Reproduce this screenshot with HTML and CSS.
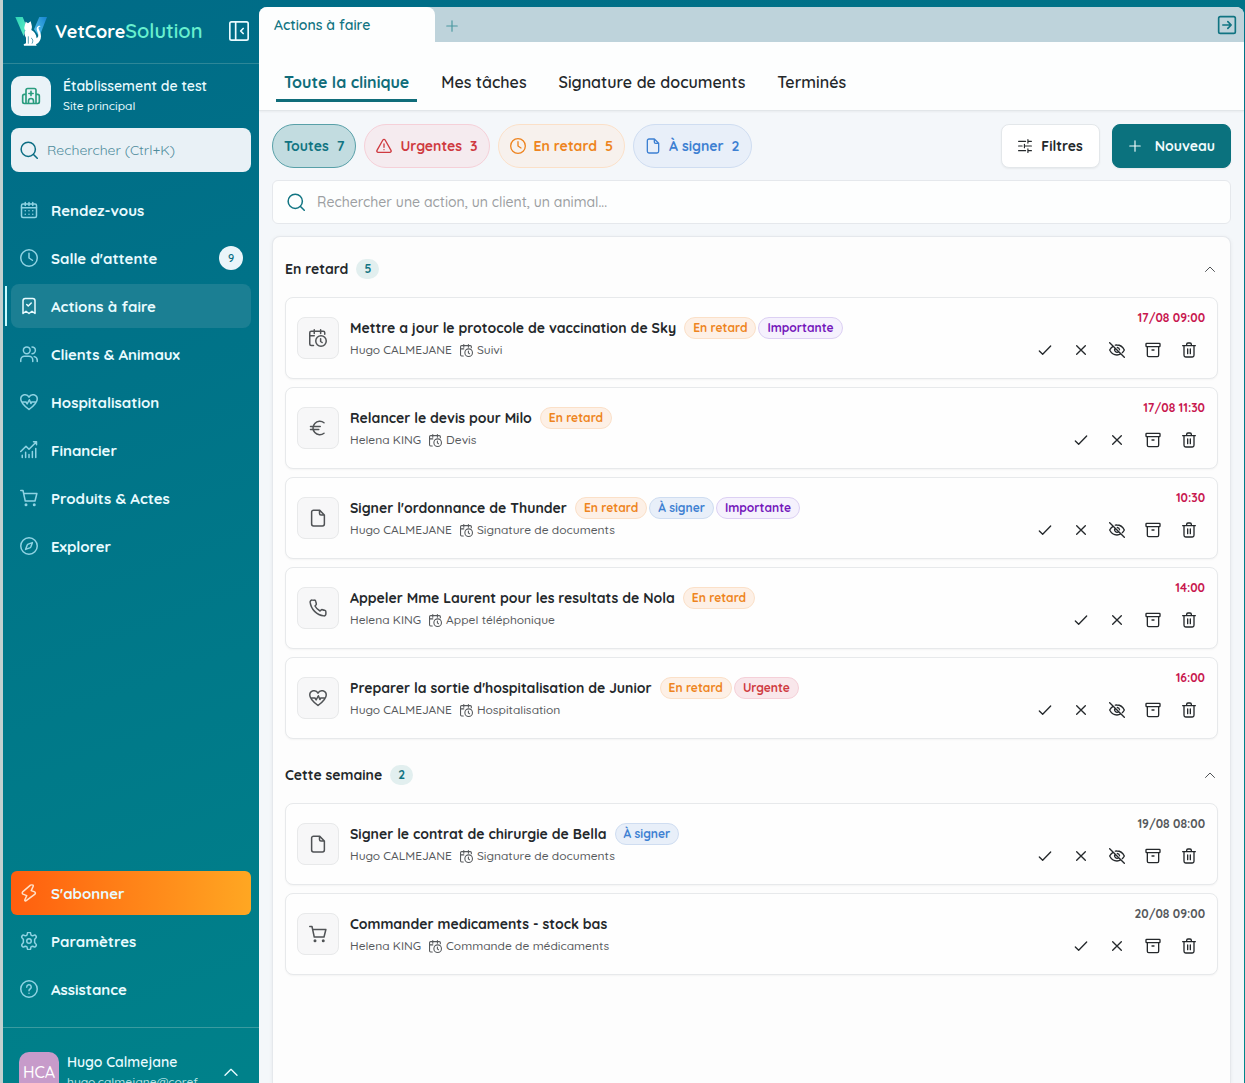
FILE: index.html
```html
<!DOCTYPE html>
<html lang="fr">
<head>
  <meta charset="UTF-8">
  <meta name="viewport" content="width=device-width, initial-scale=1">
  <title>Actions à faire</title>
  <link rel="stylesheet" href="styles.css">
</head>
<body>
  <!-- Icon sprite -->
  <svg class="sprite" aria-hidden="true">
    <symbol id="i-panel" viewBox="0 0 24 24"><rect x="1" y="1" width="22" height="22" rx="2"/><path d="M8 1v22M17 9l-3 3 3 3"/></symbol>
    <symbol id="i-clinic" viewBox="0 0 24 24"><path d="M6 21V5a2 2 0 0 1 2-2h8a2 2 0 0 1 2 2v16M6 10H4a2 2 0 0 0-2 2v7a2 2 0 0 0 2 2h16a2 2 0 0 0 2-2v-7a2 2 0 0 0-2-2h-2M9 21v-3a3 3 0 0 1 6 0v3M12 6.500v5M9.500 9h5"/></symbol>
    <symbol id="i-search" viewBox="0 0 24 24"><circle cx="11" cy="11" r="9.500"/><path d="M18 18l5 5"/></symbol>
    <symbol id="i-calendar" viewBox="0 0 24 24"><rect x="2" y="4" width="20" height="18" rx="2"/><path d="M2 9h20M7 2v4M17 2v4M12 2v4M7 13h.01M12 13h.01M17 13h.01M7 17.500h.01M12 17.500h.01M17 17.500h.01"/></symbol>
    <symbol id="i-clock" viewBox="0 0 24 24"><circle cx="12" cy="12" r="11"/><path d="M12 5.500V12l4.500 3"/></symbol>
    <symbol id="i-task" viewBox="0 0 24 24"><path d="M4 22V5a3 3 0 0 1 3-3h10a3 3 0 0 1 3 3v17l-4-3-4 3-4-3zM9 10l2 2 4-4"/></symbol>
    <symbol id="i-users" viewBox="0 0 24 24"><circle cx="9" cy="7" r="4.500"/><path d="M1 22v-2a5 5 0 0 1 5-5h6a5 5 0 0 1 5 5v2M16 2.500a4.500 4.500 0 0 1 0 9M19 15.500a5 5 0 0 1 4 5V22"/></symbol>
    <symbol id="i-heart" viewBox="0 0 24 24"><path d="M12 22C8 19 1 13.500 1 8A5.800 5.800 0 0 1 12 5.500 5.800 5.800 0 0 1 23 8c0 5.500-7 11-11 14zM2.500 12H8l1.500 2.500L12.500 9l2 5 1.200-2h5.800"/></symbol>
    <symbol id="i-chart" viewBox="0 0 24 24"><path d="M1 14l7-7 4 4L22 1M22 1h-4M22 1v4M3 22v-3M7.500 22v-7M12 22v-4M16.500 22v-8M21 22V10"/></symbol>
    <symbol id="i-cart" viewBox="0 0 24 24"><path d="M1 2h3l3 14h13l2.500-10H5"/><circle cx="8" cy="21" r="1"/><circle cx="19" cy="21" r="1"/></symbol>
    <symbol id="i-compass" viewBox="0 0 24 24"><circle cx="12" cy="12" r="11"/><path d="M16.500 7.500l-2 5.500a3 3 0 0 1-1.500 1.500l-5.500 2 2-5.500A3 3 0 0 1 11 9.500z"/></symbol>
    <symbol id="i-bolt" viewBox="0 0 24 24"><path d="M14 1.500L3.500 10.500a2 2 0 0 0 .5 3l5 2-2.500 5.500c-.4 1.200.8 2 1.800 1.200L20 13.500a2 2 0 0 0-.5-3L15 8.800l2.500-5.600C18 2 17.500.5 14 1.500z"/></symbol>
    <symbol id="i-gear" viewBox="0 0 24 24"><path d="M9.700 2.500a2.300 2.300 0 0 1 4.600 0l.4 1.600 1.800 1 1.600-.5a2.300 2.300 0 0 1 2.500 3.900L19.500 10v4l1.100 1.500a2.300 2.300 0 0 1-2.500 3.900l-1.600-.5-1.800 1-.4 1.600a2.300 2.300 0 0 1-4.600 0l-.4-1.600-1.800-1-1.600.5a2.300 2.300 0 0 1-2.500-3.900L4.500 14v-4L3.400 8.500a2.300 2.300 0 0 1 2.500-3.900l1.600.5 1.800-1z"/><circle cx="12" cy="12" r="3"/></symbol>
    <symbol id="i-help" viewBox="0 0 24 24"><circle cx="12" cy="12" r="11"/><path d="M9 9.500a3 3 0 1 1 4.500 2.500c-1 .6-1.500 1-1.500 2.200M12 17.500v.01"/></symbol>
    <symbol id="i-up" viewBox="0 0 24 24"><path d="M3 17l9-9 9 9"/></symbol>
    <symbol id="i-plus" viewBox="0 0 24 24"><path d="M12 3v18M3 12h18"/></symbol>
    <symbol id="i-exit" viewBox="0 0 24 24"><rect x="2" y="2" width="20" height="20" rx="2"/><path d="M7 12h10M13 8l4 4-4 4"/></symbol>
    <symbol id="i-alert" viewBox="0 0 24 24"><path d="M10.300 3L1.500 18.500A2 2 0 0 0 3.200 21.500h17.600a2 2 0 0 0 1.700-3L13.700 3a2 2 0 0 0-3.400 0zM12 9v5M12 17.500v.01"/></symbol>
    <symbol id="i-file" viewBox="0 0 24 24"><path d="M14 1.500H6a2.500 2.500 0 0 0-2.500 2.500v16A2.500 2.500 0 0 0 6 22.500h12a2.500 2.500 0 0 0 2.500-2.500V8zM14 1.500V6a2 2 0 0 0 2 2h4.500"/></symbol>
    <symbol id="i-filters" viewBox="0 0 24 24"><path d="M1 4h12M17 4h6M17 1v6M1 12h6M11 12h12M11 9v6M1 20h12M17 20h6M17 17v6"/></symbol>
    <symbol id="i-schedule" viewBox="0 0 24 24"><path d="M6 22H3a2 2 0 0 1-2-2V5a2 2 0 0 1 2-2h16a2 2 0 0 1 2 2v2M1 9h6M7 1v5M15.500 1v5"/><circle cx="16" cy="16" r="7"/><path d="M15.500 13v3.500l2 1.500"/></symbol>
    <symbol id="i-euro" viewBox="0 0 24 24"><path d="M20 5a9 9 0 1 0 0 14M2 10h13M2 14h11"/></symbol>
    <symbol id="i-phone" viewBox="0 0 24 24"><path d="M22.500 17v3a2.500 2.500 0 0 1-2.700 2.500A21 21 0 0 1 1.500 4.200 2.500 2.500 0 0 1 4 1.500h3a2 2 0 0 1 2 1.700c.2 1 .4 1.900.7 2.700a2 2 0 0 1-.5 2.100L8 9.300a16 16 0 0 0 6.700 6.700l1.300-1.200a2 2 0 0 1 2.100-.5c.8.300 1.700.6 2.700.7a2 2 0 0 1 1.700 2z"/></symbol>
    <symbol id="i-check" viewBox="0 0 24 24"><path d="M3.500 13.500l5 5L20.500 6"/></symbol>
    <symbol id="i-x" viewBox="0 0 24 24"><path d="M5.500 5.500l13 13M18.500 5.500l-13 13"/></symbol>
    <symbol id="i-hide" viewBox="0 0 24 24"><path d="M1 1l22 22M9.500 4.700A11 11 0 0 1 12 4.500c5 0 9 3.500 11 7.500a15 15 0 0 1-3 4M6 6.500A14 14 0 0 0 1 12c2 4 6 7.500 11 7.500a11 11 0 0 0 5.500-1.600M14.500 14.700a3.800 3.800 0 0 1-5.300-5.300M12.500 8.200a3.800 3.800 0 0 1 3.300 3.400"/></symbol>
    <symbol id="i-archive" viewBox="0 0 24 24"><rect x="1.500" y="2" width="21" height="5" rx="1"/><path d="M3.500 7v13a2 2 0 0 0 2 2h13a2 2 0 0 0 2-2V7M10.500 12h3"/></symbol>
    <symbol id="i-trash" viewBox="0 0 24 24"><path d="M2.500 5.500h19M4.500 5.500V20a2.500 2.500 0 0 0 2.500 2.500h10a2.500 2.500 0 0 0 2.500-2.500V5.500M8.500 5.500V3.500a2 2 0 0 1 2-2h3a2 2 0 0 1 2 2v2M10 10.500v7M14 10.500v7"/></symbol>
  </svg>

  <div class="app">
    <aside class="sidebar">
      <div class="brand">
        <svg class="logo" viewBox="0 0 96 90" aria-hidden="true">
          <defs>
            <linearGradient id="lg1" x1="0" y1="0" x2="1" y2="1"><stop offset="0" stop-color="#2fd3b5"/><stop offset="1" stop-color="#5ff0c8"/></linearGradient>
            <linearGradient id="lg2" x1="0" y1="1" x2="1" y2="0"><stop offset="0" stop-color="#5cc8ee"/><stop offset="1" stop-color="#1583cf"/></linearGradient>
          </defs>
          <path fill="url(#lg1)" d="M1 3h22l10 24-7 34z"/>
          <path fill="url(#lg2)" d="M73 3h23L73 62 57 40z"/>
          <path fill="#fff" d="M29 30l3-13 7 5 8-6 3 12c2 6 0 10-1 14 8 4 15 12 16 25 5-3 6-9 4-15s-6-12-3-18c3-5 9-6 11-3-6 1-8 4-5 10 4 8 8 17 5 27-2 8-8 14-14 17l2 4H27l-1-4 7-3V65c-5-8-6-15-2-22-3-3-4-8-2-13z"/>
          <path fill="none" stroke="#087391" stroke-width="2" d="M40 61v22M48 66c6 2 7 10 3 17"/>
        </svg>
        <span class="brand-name">VetCore<span>Solution</span></span>
        <button class="collapse" aria-label="Réduire le menu"><svg class="icon icon-20"><use href="#i-panel"/></svg></button>
      </div>

      <div class="site">
        <span class="site-icon"><svg class="icon icon-20"><use href="#i-clinic"/></svg></span>
        <div>
          <div class="site-name">Établissement de test</div>
          <div class="site-sub">Site principal</div>
        </div>
      </div>

      <label class="side-search">
        <svg class="icon icon-18"><use href="#i-search"/></svg>
        <input type="search" placeholder="Rechercher (Ctrl+K)" aria-label="Rechercher">
      </label>

      <nav class="nav">
        <a href="#"><svg class="icon icon-18"><use href="#i-calendar"/></svg>Rendez-vous</a>
        <a href="#"><svg class="icon icon-18"><use href="#i-clock"/></svg>Salle d'attente<span class="nav-count">9</span></a>
        <a href="#" class="active"><svg class="icon icon-18"><use href="#i-task"/></svg>Actions à faire</a>
        <a href="#"><svg class="icon icon-18"><use href="#i-users"/></svg>Clients &amp; Animaux</a>
        <a href="#"><svg class="icon icon-18"><use href="#i-heart"/></svg>Hospitalisation</a>
        <a href="#"><svg class="icon icon-18"><use href="#i-chart"/></svg>Financier</a>
        <a href="#"><svg class="icon icon-18"><use href="#i-cart"/></svg>Produits &amp; Actes</a>
        <a href="#"><svg class="icon icon-18"><use href="#i-compass"/></svg>Explorer</a>
      </nav>

      <nav class="nav nav-bottom">
        <a href="#" class="subscribe"><svg class="icon icon-18"><use href="#i-bolt"/></svg>S'abonner</a>
        <a href="#"><svg class="icon icon-18"><use href="#i-gear"/></svg>Paramètres</a>
        <a href="#"><svg class="icon icon-18"><use href="#i-help"/></svg>Assistance</a>
      </nav>

      <button class="user">
        <span class="avatar">HCA</span>
        <span class="user-text">
          <span class="user-name">Hugo Calmejane</span>
          <span class="user-mail">hugo.calmejane@coref</span>
        </span>
        <svg class="icon icon-16"><use href="#i-up"/></svg>
      </button>
    </aside>

    <main class="main">
      <div class="tabbar">
        <a href="#" class="tab">Actions à faire</a>
        <button class="tab-add" aria-label="Nouvel onglet"><svg class="icon icon-14"><use href="#i-plus"/></svg></button>
        <button class="tab-exit" aria-label="Ouvrir le panneau"><svg class="icon icon-20"><use href="#i-exit"/></svg></button>
      </div>

      <nav class="views">
        <a href="#" class="active">Toute la clinique</a>
        <a href="#">Mes tâches</a>
        <a href="#">Signature de documents</a>
        <a href="#">Terminés</a>
      </nav>

      <div class="content">
        <div class="toolbar">
          <button class="pill teal">Toutes <span>7</span></button>
          <button class="pill red"><svg class="icon icon-16"><use href="#i-alert"/></svg>Urgentes <span>3</span></button>
          <button class="pill orange"><svg class="icon icon-16"><use href="#i-clock"/></svg>En retard <span>5</span></button>
          <button class="pill blue"><svg class="icon icon-16"><use href="#i-file"/></svg>À signer <span>2</span></button>
          <div class="toolbar-right">
            <button class="btn"><svg class="icon icon-14"><use href="#i-filters"/></svg>Filtres</button>
            <button class="btn primary"><svg class="icon icon-14"><use href="#i-plus"/></svg>Nouveau</button>
          </div>
        </div>

        <label class="search">
          <svg class="icon icon-18"><use href="#i-search"/></svg>
          <input type="search" placeholder="Rechercher une action, un client, un animal..." aria-label="Rechercher une action">
        </label>

        <div class="panel">
          <section class="group">
            <button class="group-head"><span>En retard</span><span class="count">5</span><svg class="icon icon-12"><use href="#i-up"/></svg></button>

            <article class="task">
              <span class="task-icon"><svg class="icon icon-18"><use href="#i-schedule"/></svg></span>
              <div class="task-text">
                <div class="task-title"><span>Mettre a jour le protocole de vaccination de Sky</span><span class="badge orange">En retard</span><span class="badge purple">Importante</span></div>
                <div class="task-meta">Hugo CALMEJANE <svg class="icon icon-13"><use href="#i-schedule"/></svg>Suivi</div>
              </div>
              <div class="task-side">
                <time class="late">17/08 09:00</time>
                <div class="actions">
                  <button aria-label="Terminer"><svg class="icon icon-16"><use href="#i-check"/></svg></button>
                  <button aria-label="Annuler"><svg class="icon icon-16"><use href="#i-x"/></svg></button>
                  <button aria-label="Masquer"><svg class="icon icon-16"><use href="#i-hide"/></svg></button>
                  <button aria-label="Archiver"><svg class="icon icon-16"><use href="#i-archive"/></svg></button>
                  <button aria-label="Supprimer"><svg class="icon icon-16"><use href="#i-trash"/></svg></button>
                </div>
              </div>
            </article>

            <article class="task">
              <span class="task-icon"><svg class="icon icon-18"><use href="#i-euro"/></svg></span>
              <div class="task-text">
                <div class="task-title"><span>Relancer le devis pour Milo</span><span class="badge orange">En retard</span></div>
                <div class="task-meta">Helena KING <svg class="icon icon-13"><use href="#i-schedule"/></svg>Devis</div>
              </div>
              <div class="task-side">
                <time class="late">17/08 11:30</time>
                <div class="actions">
                  <button aria-label="Terminer"><svg class="icon icon-16"><use href="#i-check"/></svg></button>
                  <button aria-label="Annuler"><svg class="icon icon-16"><use href="#i-x"/></svg></button>
                  <button aria-label="Archiver"><svg class="icon icon-16"><use href="#i-archive"/></svg></button>
                  <button aria-label="Supprimer"><svg class="icon icon-16"><use href="#i-trash"/></svg></button>
                </div>
              </div>
            </article>

            <article class="task">
              <span class="task-icon"><svg class="icon icon-18"><use href="#i-file"/></svg></span>
              <div class="task-text">
                <div class="task-title"><span>Signer l'ordonnance de Thunder</span><span class="badge orange">En retard</span><span class="badge blue">À signer</span><span class="badge purple">Importante</span></div>
                <div class="task-meta">Hugo CALMEJANE <svg class="icon icon-13"><use href="#i-schedule"/></svg>Signature de documents</div>
              </div>
              <div class="task-side">
                <time class="late">10:30</time>
                <div class="actions">
                  <button aria-label="Terminer"><svg class="icon icon-16"><use href="#i-check"/></svg></button>
                  <button aria-label="Annuler"><svg class="icon icon-16"><use href="#i-x"/></svg></button>
                  <button aria-label="Masquer"><svg class="icon icon-16"><use href="#i-hide"/></svg></button>
                  <button aria-label="Archiver"><svg class="icon icon-16"><use href="#i-archive"/></svg></button>
                  <button aria-label="Supprimer"><svg class="icon icon-16"><use href="#i-trash"/></svg></button>
                </div>
              </div>
            </article>

            <article class="task">
              <span class="task-icon"><svg class="icon icon-18"><use href="#i-phone"/></svg></span>
              <div class="task-text">
                <div class="task-title"><span>Appeler Mme Laurent pour les resultats de Nola</span><span class="badge orange">En retard</span></div>
                <div class="task-meta">Helena KING <svg class="icon icon-13"><use href="#i-schedule"/></svg>Appel téléphonique</div>
              </div>
              <div class="task-side">
                <time class="late">14:00</time>
                <div class="actions">
                  <button aria-label="Terminer"><svg class="icon icon-16"><use href="#i-check"/></svg></button>
                  <button aria-label="Annuler"><svg class="icon icon-16"><use href="#i-x"/></svg></button>
                  <button aria-label="Archiver"><svg class="icon icon-16"><use href="#i-archive"/></svg></button>
                  <button aria-label="Supprimer"><svg class="icon icon-16"><use href="#i-trash"/></svg></button>
                </div>
              </div>
            </article>

            <article class="task">
              <span class="task-icon"><svg class="icon icon-18"><use href="#i-heart"/></svg></span>
              <div class="task-text">
                <div class="task-title"><span>Preparer la sortie d'hospitalisation de Junior</span><span class="badge orange">En retard</span><span class="badge red">Urgente</span></div>
                <div class="task-meta">Hugo CALMEJANE <svg class="icon icon-13"><use href="#i-schedule"/></svg>Hospitalisation</div>
              </div>
              <div class="task-side">
                <time class="late">16:00</time>
                <div class="actions">
                  <button aria-label="Terminer"><svg class="icon icon-16"><use href="#i-check"/></svg></button>
                  <button aria-label="Annuler"><svg class="icon icon-16"><use href="#i-x"/></svg></button>
                  <button aria-label="Masquer"><svg class="icon icon-16"><use href="#i-hide"/></svg></button>
                  <button aria-label="Archiver"><svg class="icon icon-16"><use href="#i-archive"/></svg></button>
                  <button aria-label="Supprimer"><svg class="icon icon-16"><use href="#i-trash"/></svg></button>
                </div>
              </div>
            </article>
          </section>

          <section class="group">
            <button class="group-head"><span>Cette semaine</span><span class="count">2</span><svg class="icon icon-12"><use href="#i-up"/></svg></button>

            <article class="task">
              <span class="task-icon"><svg class="icon icon-18"><use href="#i-file"/></svg></span>
              <div class="task-text">
                <div class="task-title"><span>Signer le contrat de chirurgie de Bella</span><span class="badge blue">À signer</span></div>
                <div class="task-meta">Hugo CALMEJANE <svg class="icon icon-13"><use href="#i-schedule"/></svg>Signature de documents</div>
              </div>
              <div class="task-side">
                <time>19/08 08:00</time>
                <div class="actions">
                  <button aria-label="Terminer"><svg class="icon icon-16"><use href="#i-check"/></svg></button>
                  <button aria-label="Annuler"><svg class="icon icon-16"><use href="#i-x"/></svg></button>
                  <button aria-label="Masquer"><svg class="icon icon-16"><use href="#i-hide"/></svg></button>
                  <button aria-label="Archiver"><svg class="icon icon-16"><use href="#i-archive"/></svg></button>
                  <button aria-label="Supprimer"><svg class="icon icon-16"><use href="#i-trash"/></svg></button>
                </div>
              </div>
            </article>

            <article class="task">
              <span class="task-icon"><svg class="icon icon-18"><use href="#i-cart"/></svg></span>
              <div class="task-text">
                <div class="task-title"><span>Commander medicaments - stock bas</span></div>
                <div class="task-meta">Helena KING <svg class="icon icon-13"><use href="#i-schedule"/></svg>Commande de médicaments</div>
              </div>
              <div class="task-side">
                <time>20/08 09:00</time>
                <div class="actions">
                  <button aria-label="Terminer"><svg class="icon icon-16"><use href="#i-check"/></svg></button>
                  <button aria-label="Annuler"><svg class="icon icon-16"><use href="#i-x"/></svg></button>
                  <button aria-label="Archiver"><svg class="icon icon-16"><use href="#i-archive"/></svg></button>
                  <button aria-label="Supprimer"><svg class="icon icon-16"><use href="#i-trash"/></svg></button>
                </div>
              </div>
            </article>
          </section>
        </div>
      </div>
    </main>
  </div>
</body>
</html>
```
FILE: styles.css
```css
* {
  box-sizing: border-box;
}
body {
  margin: 0;
  font-family: Quicksand, Inter, sans-serif;
  font-size: 14px;
  font-weight: 500;
  color: #24282b;
}
a {
  color: inherit;
  text-decoration: none;
}
button {
  font: inherit;
  color: inherit;
  background: none;
  border: 0;
  padding: 0;
  cursor: pointer;
}
input {
  flex: 1;
  min-width: 0;
  font: inherit;
  color: inherit;
  background: none;
  border: 0;
  padding: 0;
  outline: none;
}
.sprite {
  display: none;
}
.icon {
  flex: none;
  fill: none;
  stroke: currentColor;
  stroke-width: 2;
  stroke-linecap: round;
  stroke-linejoin: round;
}
.icon-12 { width: 12px; height: 12px; }
.icon-13 { width: 13px; height: 13px; }
.icon-14 { width: 14px; height: 14px; }
.icon-16 { width: 16px; height: 16px; }
.icon-18 { width: 18px; height: 18px; }
.icon-20 { width: 20px; height: 20px; }

.app {
  display: flex;
  height: 100vh;
  overflow: hidden;
  border-left: 3px solid #c3d0cf;
  background: linear-gradient(160deg, #006b87, #00888b);
}

/* Sidebar */
.sidebar {
  display: flex;
  flex-direction: column;
  flex: none;
  width: 256px;
  height: calc(100vh + 32px);
  color: #e9fbff;
}
.brand {
  display: flex;
  align-items: center;
  height: 64px;
  padding: 0 10px 2px 12px;
  border-bottom: 1px solid #2d8798;
}
.logo {
  width: 32px;
  height: 30px;
}
.brand-name {
  margin-left: 8px;
  font-size: 18px;
  font-weight: 700;
  color: #fff;
}
.brand-name span {
  font-size: 20px;
  font-weight: 600;
  color: #68f0cf;
}
.collapse {
  display: flex;
  margin-left: auto;
}
.site {
  display: flex;
  align-items: center;
  gap: 12px;
  padding: 12px 8px;
}
.site-icon {
  display: flex;
  align-items: center;
  justify-content: center;
  width: 40px;
  height: 40px;
  border-radius: 10px;
  background: #eaf3f8;
  color: #2a9d7f;
}
.site-name {
  font-weight: 600;
  line-height: 20px;
}
.site-sub {
  font-size: 12px;
  line-height: 20px;
}
.side-search {
  display: flex;
  align-items: center;
  gap: 9px;
  height: 44px;
  margin: 0 8px 16px;
  padding: 0 9px;
  border-radius: 8px;
  background: #e9f1f6;
  color: #0b6d83;
  font-weight: 400;
}
.side-search input::placeholder {
  color: #4f8c9c;
}
.nav {
  display: flex;
  flex-direction: column;
  flex: 1;
  gap: 4px;
  padding: 0 8px;
}
.nav a {
  position: relative;
  display: flex;
  align-items: center;
  gap: 13px;
  height: 44px;
  padding: 0 8px 0 9px;
  border-radius: 8px;
  font-size: 15px;
  font-weight: 700;
}
.nav .icon {
  color: #8fd3e3;
}
.nav .active {
  background: #1b7f93;
}
.nav .active::before {
  content: "";
  position: absolute;
  left: -6px;
  top: 2px;
  width: 2px;
  height: 40px;
  background: #c8fbff;
}
.nav .active .icon {
  color: #e9fbff;
}
.nav-count {
  display: flex;
  align-items: center;
  justify-content: center;
  width: 24px;
  height: 24px;
  margin-left: auto;
  border-radius: 50%;
  background: #eaf5fa;
  color: #0b6d83;
  font-size: 11px;
  font-weight: 600;
}
.nav-bottom {
  flex: none;
  padding-bottom: 16px;
}
.nav .subscribe {
  border-radius: 6px;
  background: linear-gradient(90deg, #ff5e0e, #ffa722);
}
.nav .subscribe .icon {
  color: #ffe0c8;
}
.user {
  display: flex;
  align-items: center;
  height: 88px;
  padding: 0 20px 0 16px;
  border-top: 1px solid #3a9ba0;
  text-align: left;
}
.avatar {
  width: 40px;
  height: 40px;
  border-radius: 10px;
  background: #c79bca;
  color: #fff;
  font-size: 16px;
  line-height: 40px;
  text-align: center;
}
.user-text {
  display: flex;
  flex-direction: column;
  flex: 1;
  margin-left: 8px;
}
.user-name {
  font-weight: 600;
  line-height: 20px;
}
.user-mail {
  font-size: 12px;
  line-height: 20px;
  color: #b9e3e6;
}

/* Main area */
.main {
  display: flex;
  flex-direction: column;
  flex: 1;
  min-width: 0;
  margin: 7px 1px 0 0;
  border-radius: 8px 8px 0 0;
  background: #f4f7fa;
  overflow: hidden;
}
.tabbar {
  display: flex;
  flex: none;
  height: 35px;
  background: #bed3db;
  color: #117482;
}
.tab {
  width: 176px;
  padding: 0 15px;
  border-radius: 8px 8px 0 0;
  background: #fdfefe;
  font-weight: 600;
  line-height: 36px;
}
.tab-add {
  display: flex;
  align-items: center;
  padding: 3px 10px 0;
  color: #4b98a0;
}
.tab-exit {
  display: flex;
  align-items: center;
  margin-left: auto;
  padding-right: 7px;
}
.views {
  display: flex;
  flex: none;
  gap: 16px;
  height: 69px;
  padding: 20px 17px 8px;
  border-bottom: 1px solid #e2e6e9;
  background: #fdfefe;
  box-shadow: 0 1px 2px rgba(0, 0, 0, 0.05);
  font-size: 16px;
}
.views a {
  padding: 0 8px;
  border-bottom: 3px solid transparent;
  font-weight: 600;
  line-height: 41px;
}
.views .active {
  border-color: #106d7a;
  color: #106d7a;
  font-weight: 700;
}
.content {
  display: flex;
  flex-direction: column;
  flex: 1;
  gap: 12px;
  min-height: 0;
  padding: 13px;
  padding-bottom: 0;
}
.toolbar {
  display: flex;
  gap: 8px;
}
.pill {
  display: flex;
  align-items: center;
  gap: 8px;
  height: 44px;
  padding: 0 11px;
  border: 1px solid;
  border-radius: 22px;
  font-weight: 700;
}
.orange {
  background: #fdf0e6;
  border-color: #fbe0c8;
  color: #ee8420;
}
.red {
  background: #f9e7eb;
  border-color: #f5d0d8;
  color: #cf3a40;
}
.blue {
  background: #e8eff9;
  border-color: #cfddf1;
  color: #3d80d2;
}
.purple {
  background: #f5f1fd;
  border-color: #dcd0f3;
  color: #7416bb;
}
.pill.orange {
  background: #f7f1ed;
}
.pill.red {
  background: #f5ebef;
}
.pill.teal {
  background: #c2dce0;
  border-color: #58a0a8;
  color: #117482;
}
.toolbar-right {
  display: flex;
  gap: 12px;
  margin-left: auto;
}
.btn {
  display: flex;
  align-items: center;
  gap: 9px;
  height: 44px;
  padding: 0 16px;
  border: 1px solid #e3e7ea;
  border-radius: 8px;
  background: #fff;
  box-shadow: 0 1px 2px rgba(0, 0, 0, 0.06);
  font-weight: 700;
}
.btn.primary {
  gap: 13px;
  padding: 0 15px;
  border-color: #0b727e;
  background: #0b727e;
  color: #f2fbfc;
}
.search {
  display: flex;
  align-items: center;
  gap: 12px;
  flex: none;
  height: 44px;
  padding: 0 14px;
  border: 1px solid #e5e8ec;
  border-radius: 6px;
  background: #fdfefe;
  color: #117482;
}
.search input::placeholder {
  color: #9c9fa2;
}
.panel {
  display: flex;
  flex-direction: column;
  flex: 1;
  gap: 16px;
  min-height: 0;
  padding: 12px;
  border: 1px solid #e5e8ec;
  border-bottom: 0;
  border-radius: 8px 8px 0 0;
  background: #fdfdfd;
  box-shadow: 0 1px 4px rgba(0, 0, 0, 0.06);
}
.group {
  display: flex;
  flex-direction: column;
  gap: 8px;
}
.group-head {
  display: flex;
  align-items: center;
  gap: 8px;
  height: 40px;
  padding-right: 2px;
  font-weight: 700;
}
.group-head .icon {
  margin-left: auto;
  color: #505356;
}
.count {
  min-width: 23px;
  border-radius: 10px;
  background: #e2efef;
  color: #117482;
  font-size: 12px;
  line-height: 20px;
  text-align: center;
}
.task {
  display: flex;
  align-items: center;
  padding: 12px 12px 12px 11px;
  border: 1px solid #e7e9eb;
  border-radius: 8px;
  background: #fefefe;
  box-shadow: 0 1px 2px rgba(0, 0, 0, 0.04);
}
.task-icon {
  display: flex;
  align-items: center;
  justify-content: center;
  width: 42px;
  height: 42px;
  border: 1px solid #e8e9ea;
  border-radius: 8px;
  background: #f7f7f8;
  color: #505356;
}
.task-text {
  display: flex;
  flex-direction: column;
  flex: 1;
  gap: 2px;
  margin-left: 11px;
}
.task-title {
  display: flex;
  align-items: center;
  gap: 2px;
  height: 22px;
  font-weight: 700;
}
.task-title > :first-child {
  margin-right: 6px;
}
.badge {
  padding: 0 8px;
  border-width: 1px;
  border-style: solid;
  border-radius: 11px;
  font-size: 12px;
  line-height: 20px;
}
.task-meta {
  display: flex;
  align-items: center;
  gap: 4px;
  font-size: 12px;
  line-height: 18px;
  color: #56595c;
}
.task-meta .icon {
  margin-left: 4px;
}
.task-side {
  display: flex;
  flex-direction: column;
  align-items: flex-end;
  gap: 8px;
}
.task-side time {
  font-size: 12px;
  font-weight: 700;
  line-height: 16px;
  color: #56595c;
}
.task-side .late {
  color: #c8174f;
}
.actions {
  display: flex;
  gap: 4px;
}
.actions button {
  display: flex;
  align-items: center;
  justify-content: center;
  width: 32px;
  height: 32px;
}
```
